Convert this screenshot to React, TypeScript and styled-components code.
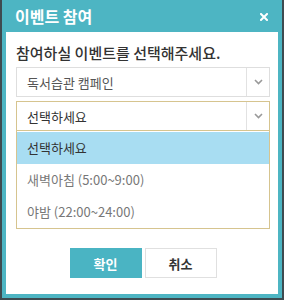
import React from "react";
import styled, { createGlobalStyle } from "styled-components";

const GlobalStyle = createGlobalStyle`
  html, body {
    margin: 0;
    padding: 0;
    background: #3e4b50;
  }
  body {
    font-family: "Noto Sans CJK KR", "Noto Sans", sans-serif;
  }
`;

const options = ["선택하세요", "새벽아침 (5:00~9:00)", "야밤 (22:00~24:00)"];

const App: React.FC = () => {
  return (
    <>
      <GlobalStyle />
      <Dialog>
        <Header>
          <HeaderTitle>이벤트 참여</HeaderTitle>
          <CloseButton aria-label="close">
            <svg width="8" height="8" viewBox="0 0 8 8">
              <path d="M1 1 L7 7 M7 1 L1 7" stroke="#fff" strokeWidth="2" strokeLinecap="square" />
            </svg>
          </CloseButton>
        </Header>
        <Body>
          <Question>참여하실 이벤트를 선택해주세요.</Question>
          <Select>
            <SelectText $muted>독서습관 캠페인</SelectText>
            <Arrow>
              <Chevron />
            </Arrow>
          </Select>
          <SelectWrap>
            <Select $focused>
              <SelectText>선택하세요</SelectText>
              <Arrow>
                <Chevron />
              </Arrow>
            </Select>
            <OptionList>
              {options.map((o, i) => (
                <Option key={o} $active={i === 0}>
                  {o}
                </Option>
              ))}
            </OptionList>
          </SelectWrap>
          <Buttons>
            <Button $primary>확인</Button>
            <Button>취소</Button>
          </Buttons>
        </Body>
      </Dialog>
    </>
  );
};

const Chevron: React.FC = () => (
  <svg width="9" height="6" viewBox="0 0 9 6">
    <path d="M1 1 L4.5 4.5 L8 1" fill="none" stroke="#999" strokeWidth="1.6" />
  </svg>
);

export default App;

const Dialog = styled.div`
  margin: 0 2px;
  width: 280px;
  height: 298px;
  box-sizing: border-box;
  background: #4db5c3;
  padding: 0 4px 4px;
  display: flex;
  flex-direction: column;
`;

const Header = styled.div`
  height: 32px;
  display: flex;
  align-items: center;
  justify-content: space-between;
  padding: 0 10px 0 9px;
`;

const HeaderTitle = styled.div`
  color: #fff;
  font-size: 16px;
  font-weight: bold;
`;

const CloseButton = styled.div`
  display: flex;
  width: 8px;
  height: 8px;
  margin-top: 2px;
`;

const Body = styled.div`
  flex: 1;
  background: #fff;
  padding: 6px 8px 0 10px;
  display: flex;
  flex-direction: column;
`;

const Question = styled.div`
  font-size: 15px;
  font-weight: 500;
  color: #333;
  height: 29px;
  line-height: 29px;
`;

const SelectWrap = styled.div`
  margin-top: 4px;
  display: flex;
  flex-direction: column;
`;

const Select = styled.div<{ $focused?: boolean }>`
  height: 30px;
  box-sizing: border-box;
  border: 1px solid ${(p) => (p.$focused ? "#d6c48f" : "#dedede")};
  display: flex;
  align-items: center;
`;

const SelectText = styled.div<{ $muted?: boolean }>`
  flex: 1;
  padding-left: 10px;
  font-size: 13px;
  color: ${(p) => (p.$muted ? "#555" : "#333")};
`;

const Arrow = styled.div`
  width: 22px;
  height: 100%;
  border-left: 1px solid #e2e2e2;
  display: flex;
  align-items: center;
  justify-content: center;
`;

const OptionList = styled.div`
  border: 1px solid #d6c48f;
  border-top: none;
  padding-top: 1px;
`;

const Option = styled.div<{ $active?: boolean }>`
  height: 32px;
  line-height: 32px;
  padding-left: 10px;
  font-size: 13px;
  color: ${(p) => (p.$active ? "#333" : "#777")};
  background: ${(p) => (p.$active ? "#a8ddf2" : "#fff")};
`;

const Buttons = styled.div`
  margin-top: 19px;
  display: flex;
  justify-content: center;
  gap: 3px;
`;

const Button = styled.div<{ $primary?: boolean }>`
  width: 72px;
  height: 30px;
  box-sizing: border-box;
  display: flex;
  align-items: center;
  justify-content: center;
  font-size: 13px;
  font-weight: bold;
  color: ${(p) => (p.$primary ? "#fff" : "#333")};
  background: ${(p) => (p.$primary ? "#4ab4c3" : "#fff")};
  border: 1px solid ${(p) => (p.$primary ? "#4ab4c3" : "#e0e0e0")};
`;
